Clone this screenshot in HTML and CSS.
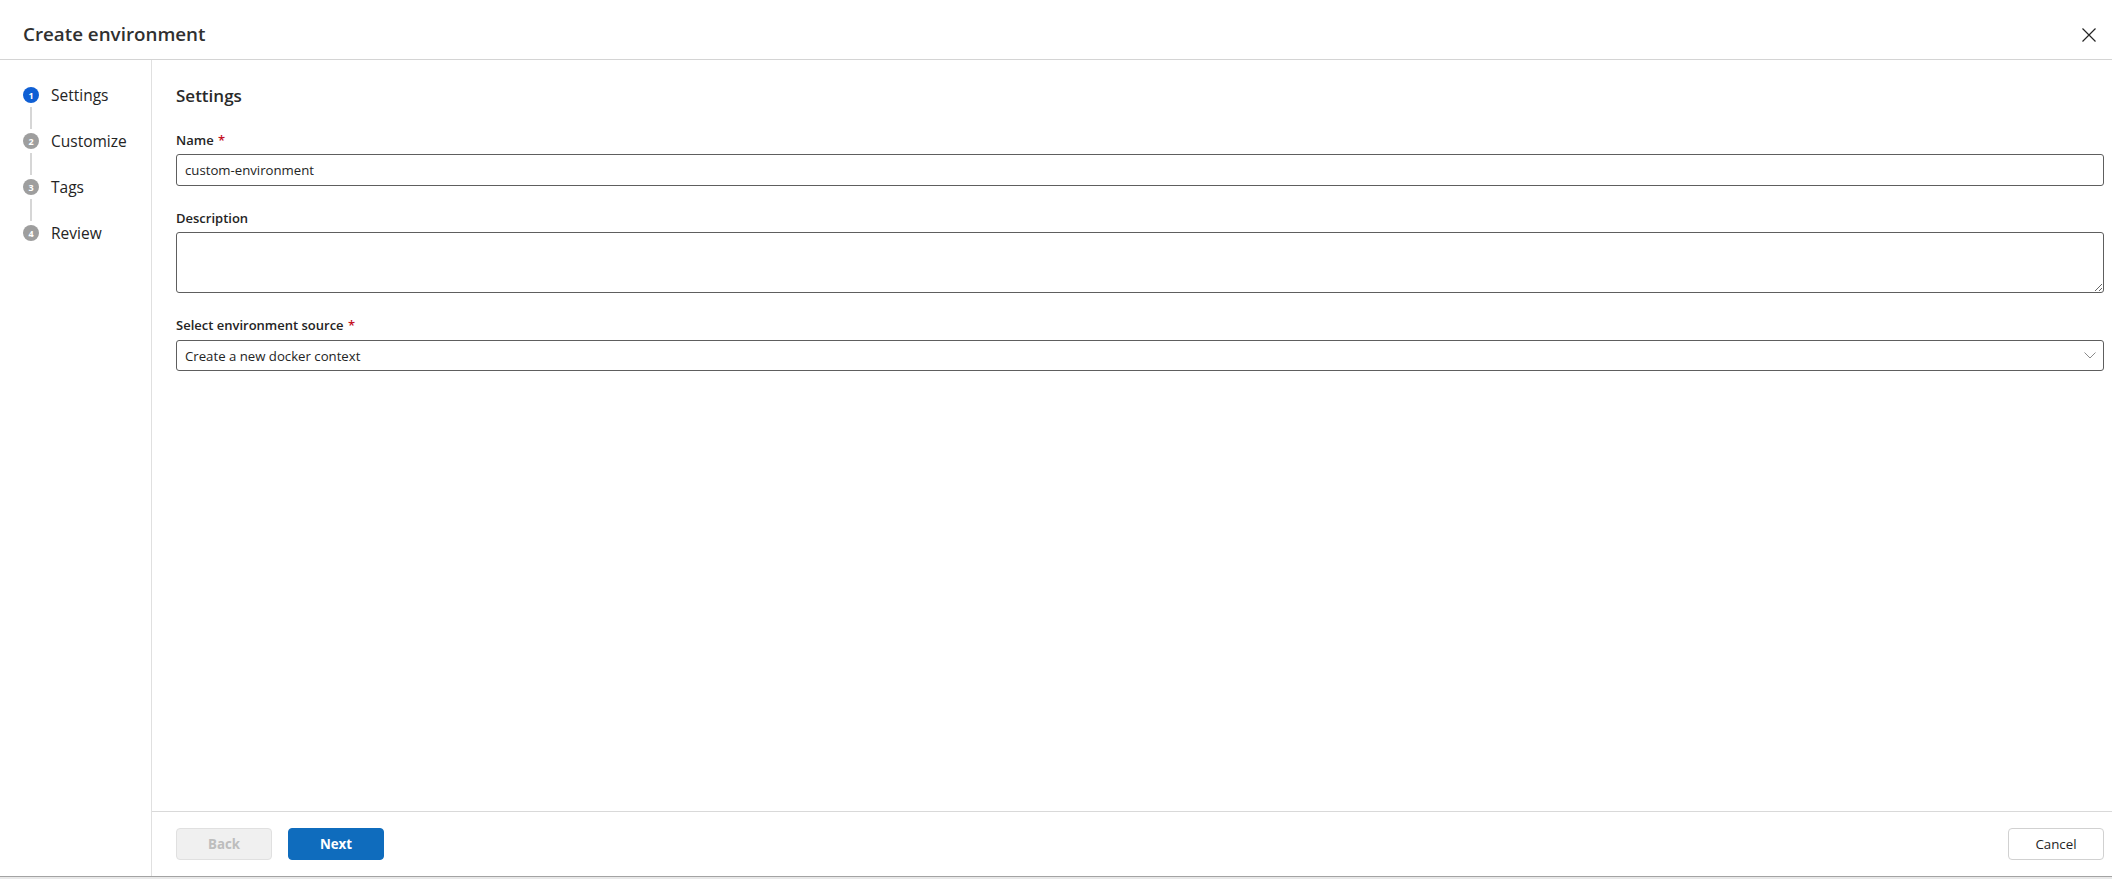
FILE: index.html
```html
<!DOCTYPE html>
<html lang="en">
<head>
<meta charset="utf-8">
<title>Create environment</title>
<link rel="stylesheet" href="styles.css">
</head>
<body>
<div class="dialog">
  <header class="header">
    <h1 class="title">Create environment</h1>
    <button class="close" aria-label="Close">
      <svg width="20" height="20" viewBox="0 0 20 20"><path d="M3.5 3.5 L16.5 16.5 M16.5 3.5 L3.5 16.5" stroke="#242424" stroke-width="1.2" fill="none"/></svg>
    </button>
  </header>
  <div class="body">
    <nav class="steps">
      <div class="step active"><span class="dot">1</span><span class="step-label">Settings</span></div>
      <div class="connector"></div>
      <div class="step"><span class="dot">2</span><span class="step-label">Customize</span></div>
      <div class="connector"></div>
      <div class="step"><span class="dot">3</span><span class="step-label">Tags</span></div>
      <div class="connector"></div>
      <div class="step"><span class="dot">4</span><span class="step-label">Review</span></div>
    </nav>
    <main class="main">
      <div class="content">
        <h2 class="heading">Settings</h2>
        <div class="field">
          <label class="label">Name <span class="req">*</span></label>
          <input class="input" type="text" value="custom-environment">
        </div>
        <div class="field">
          <label class="label">Description</label>
          <textarea class="textarea"></textarea>
        </div>
        <div class="field">
          <label class="label">Select environment source <span class="req">*</span></label>
          <div class="select">
            <span class="select-value">Create a new docker context</span>
            <svg class="chevron" width="12" height="7" viewBox="0 0 12 7"><path d="M0.5 0.5 L6 6 L11.5 0.5" stroke="#8a8a8a" stroke-width="1" fill="none"/></svg>
          </div>
        </div>
      </div>
      <footer class="footer">
        <button class="btn btn-back" disabled>Back</button>
        <button class="btn btn-next">Next</button>
        <button class="btn btn-cancel">Cancel</button>
      </footer>
    </main>
  </div>
</div>
</body>
</html>
```
FILE: styles.css
```css
html, body {
  margin: 0;
  padding: 0;
}
body {
  background: #e9e9e9;
  font-family: "Open Sans", "Noto Sans", sans-serif;
  color: #242424;
  height: 879px;
  overflow: hidden;
}
.dialog {
  height: 877px;
  box-sizing: border-box;
  background: #fff;
  border-bottom: 1px solid #a3a3a3;
  display: flex;
  flex-direction: column;
}
.header {
  height: 60px;
  box-sizing: border-box;
  border-bottom: 1px solid #d4d4d4;
  display: flex;
  justify-content: space-between;
  align-items: flex-start;
  padding: 0 13px 0 23px;
  flex-shrink: 0;
}
.title {
  margin: 0;
  padding-top: 21px;
  font-size: 18.8px;
  line-height: 26px;
  font-weight: 600;
  color: #303030;
}
.close {
  margin-top: 25px;
  width: 20px;
  height: 20px;
  padding: 0;
  border: 0;
  background: transparent;
  display: flex;
}
.body {
  flex: 1;
  display: flex;
  min-height: 0;
}
.steps {
  width: 152px;
  box-sizing: border-box;
  border-right: 1px solid #e0e0e0;
  padding: 23px 0 0 23px;
  flex-shrink: 0;
}
.step {
  display: flex;
  align-items: center;
  height: 24px;
  gap: 12px;
}
.dot {
  width: 16px;
  height: 16px;
  border-radius: 50%;
  background: #9e9e9e;
  color: #fff;
  font-size: 9px;
  font-weight: 700;
  display: flex;
  align-items: center;
  justify-content: center;
  line-height: 1;
  flex-shrink: 0;
}
.step.active .dot {
  background: #0f5fd4;
}
.step-label {
  font-size: 15.5px;
  line-height: 24px;
  color: #242424;
}
.connector {
  width: 2px;
  height: 22px;
  margin-left: 7px;
  background: #d6d6d6;
}
.main {
  flex: 1;
  display: flex;
  flex-direction: column;
  min-width: 0;
}
.content {
  flex: 1;
  padding: 24px 8px 0 24px;
}
.heading {
  margin: 0;
  font-size: 17px;
  line-height: 24px;
  font-weight: 600;
  color: #2a2a2a;
}
.field {
  margin-top: 22px;
  display: flex;
  flex-direction: column;
}
.label {
  font-size: 13px;
  line-height: 20px;
  font-weight: 600;
  margin-bottom: 4px;
  color: #242424;
}
.req {
  color: #c50f1f;
  padding-left: 1px;
}
.input, .textarea, .select {
  box-sizing: border-box;
  width: 100%;
  border: 1px solid #5e5e5e;
  border-radius: 3px;
  font-family: "Open Sans", "Noto Sans", sans-serif;
  font-size: 13.2px;
  color: #242424;
  background: #fff;
  margin: 0;
  outline: none;
}
.input {
  height: 32px;
  padding: 0 8px;
}
.textarea {
  height: 61px;
  padding: 6px 8px;
  resize: vertical;
  display: block;
}
.select {
  height: 31px;
  margin-top: 1px;
  padding: 0 7px 0 8px;
  display: flex;
  align-items: center;
  justify-content: space-between;
}
.select-value {
  line-height: 20px;
}
.chevron {
  display: block;
}
.footer {
  height: 65px;
  box-sizing: border-box;
  border-top: 1px solid #d9d9d9;
  padding: 16px 8px 0 24px;
  display: flex;
  align-items: flex-start;
  gap: 16px;
  flex-shrink: 0;
}
.btn {
  width: 96px;
  height: 32px;
  box-sizing: border-box;
  border-radius: 4px;
  font-family: "Open Sans", "Noto Sans", sans-serif;
  font-size: 13.3px;
  padding: 0;
  margin: 0;
}
.btn-back {
  background: #f0f0f0;
  border: 1px solid #e0e0e0;
  color: #bdbdbd;
  font-weight: 700;
}
.btn-next {
  background: #0f6cbd;
  border: 1px solid #0f6cbd;
  color: #fff;
  font-weight: 700;
}
.btn-cancel {
  margin-left: auto;
  background: #fff;
  border: 1px solid #d1d1d1;
  color: #242424;
  font-weight: 400;
}
```
